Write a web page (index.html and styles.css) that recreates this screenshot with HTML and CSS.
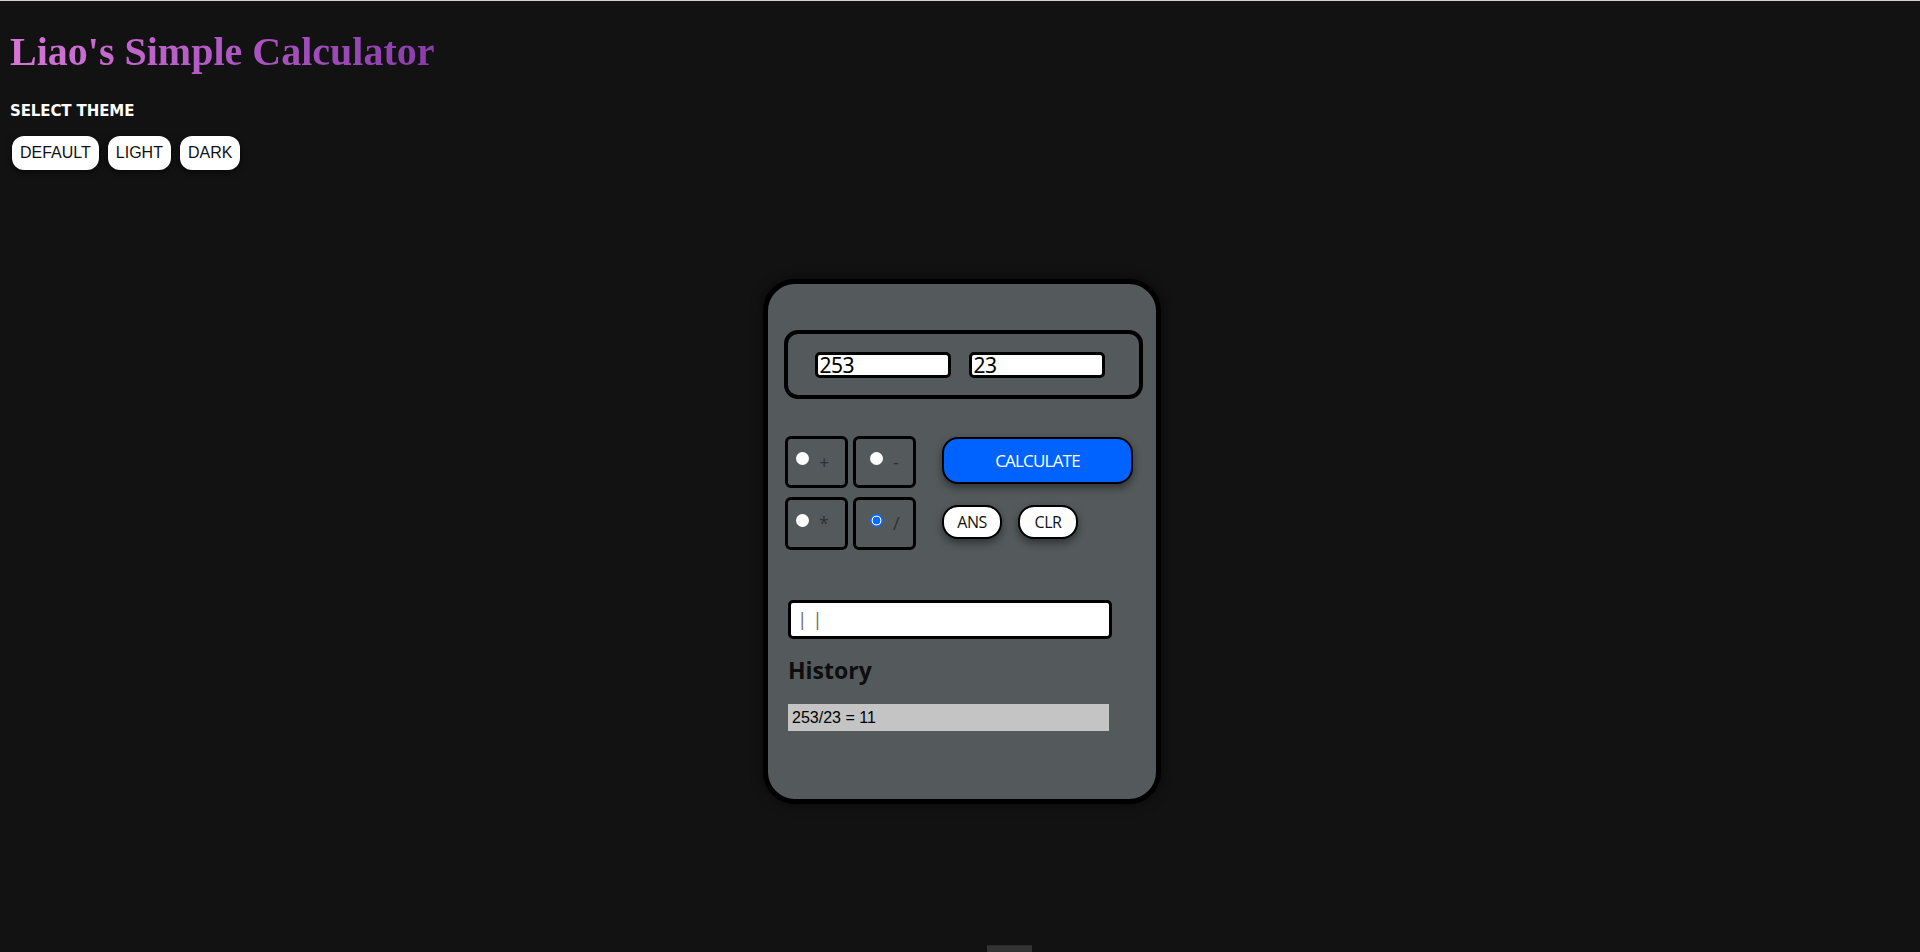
FILE: index.html
```html
<!DOCTYPE html>
<html lang="en">
<head>
<meta charset="utf-8">
<title>Liao's Simple Calculator</title>
<link rel="stylesheet" href="styles.css">
</head>
<body>
<div class="topline"></div>
<header class="header">
  <h1 class="title">Liao's Simple Calculator</h1>
  <div class="theme-label">SELECT THEME</div>
  <div class="theme-buttons">
    <button class="theme-btn">DEFAULT</button>
    <button class="theme-btn">LIGHT</button>
    <button class="theme-btn">DARK</button>
  </div>
</header>
<main class="stage">
  <section class="calc">
    <div class="display">
      <input class="num-input" type="text" value="253">
      <input class="num-input" type="text" value="23">
    </div>
    <div class="controls">
      <div class="ops">
        <label class="op"><input type="radio" name="op" class="radio"><span class="op-sign">+</span></label>
        <label class="op"><input type="radio" name="op" class="radio"><span class="op-sign">-</span></label>
        <label class="op"><input type="radio" name="op" class="radio"><span class="op-sign">*</span></label>
        <label class="op"><input type="radio" name="op" class="radio" checked><span class="op-sign">/</span></label>
      </div>
      <div class="actions">
        <button class="calc-btn">CALCULATE</button>
        <div class="small-actions">
          <button class="pill-btn">ANS</button>
          <button class="pill-btn">CLR</button>
        </div>
      </div>
    </div>
    <div class="result">| |</div>
    <h2 class="history-title">History</h2>
    <div class="history-item">253/23 = 11</div>
  </section>
  <div class="footer-tab"></div>
</main>
</body>
</html>
```
FILE: styles.css
```css
html, body {
  margin: 0;
  padding: 0;
  background: #121212;
}
body {
  overflow: hidden;
  height: 952px;
}
.topline {
  height: 1px;
  background: #d8cccc;
}
.header {
  padding: 0 8px 0 10px;
}
.title {
  display: inline-block;
  margin: 28px 0 0 0;
  font-family: "Liberation Serif", "Times New Roman", serif;
  font-weight: bold;
  font-size: 40px;
  line-height: 46px;
  background: linear-gradient(90deg, #d677d6 0%, #b158c4 50%, #8a3cab 100%);
  -webkit-background-clip: text;
  background-clip: text;
  color: transparent;
}
.theme-label {
  margin-top: 27px;
  font-family: "DejaVu Sans", sans-serif;
  font-weight: bold;
  font-size: 15px;
  line-height: 18px;
  letter-spacing: -0.1px;
  color: #ffffff;
}
.theme-buttons {
  display: flex;
  gap: 9px;
  margin-top: 16px;
  padding-left: 2px;
}
.theme-btn {
  height: 34px;
  padding: 0 8px;
  border: none;
  border-radius: 12px;
  background: #ffffff;
  color: #111;
  font-family: "Liberation Sans", Arial, sans-serif;
  font-size: 16px;
  box-shadow: 0 2px 6px rgba(0, 0, 0, 0.6);
}
.stage {
  display: flex;
  flex-direction: column;
  align-items: center;
  padding-left: 4px;
  margin-top: 109px;
}
.calc {
  box-sizing: border-box;
  width: 398px;
  height: 525px;
  border: 5px solid #000;
  border-radius: 32px;
  background: #545a5c;
  padding: 46px 13px 0 16px;
  box-shadow: 0 0 12px rgba(0, 0, 0, 0.5);
  font-family: "Open Sans", "Noto Sans", sans-serif;
}
.display {
  box-sizing: border-box;
  height: 69px;
  border: 4px solid #000;
  border-radius: 14px;
  display: flex;
  align-items: center;
  justify-content: center;
  gap: 18px;
  padding-right: 8px;
}
.num-input {
  box-sizing: border-box;
  width: 136px;
  height: 26px;
  border: 3px solid #000;
  border-radius: 5px;
  background: #fff;
  padding: 0 2px;
  font-family: "Noto Sans", "Open Sans", sans-serif;
  font-size: 21px;
  letter-spacing: -0.5px;
  color: #000;
  outline: none;
}
.controls {
  display: flex;
  margin-top: 37px;
  padding-left: 1px;
}
.ops {
  display: grid;
  grid-template-columns: 63px 63px;
  grid-template-rows: 52px 53px;
  column-gap: 5px;
  row-gap: 9px;
}
.op {
  box-sizing: border-box;
  border: 3px solid #000;
  border-radius: 6px;
  display: flex;
  align-items: center;
  align-self: stretch;
  padding: 0 0 3px 8px;
  gap: 10px;
}
.op:nth-child(2), .op:nth-child(4) {
  padding-left: 14px;
}
.radio {
  appearance: none;
  -webkit-appearance: none;
  margin: 0 0 4px 0;
  width: 13px;
  height: 13px;
  border-radius: 50%;
  background: #fff;
}
.radio:checked {
  background: radial-gradient(circle, #0b6bff 0 3.6px, #ffffff 4.2px 4.6px, #0b6bff 5.2px);
}
.op-sign {
  font-family: "Open Sans", sans-serif;
  font-size: 18px;
  line-height: 22px;
  color: #2e3132;
  margin-top: 2px;
}
.actions {
  margin-left: 26px;
  display: flex;
  flex-direction: column;
  align-items: flex-start;
  padding-top: 1px;
}
.calc-btn {
  box-sizing: border-box;
  width: 191px;
  height: 47px;
  border: 2px solid #000;
  border-radius: 16px;
  background: #0062ff;
  color: #fff;
  font-family: "Open Sans", sans-serif;
  font-size: 17px;
  letter-spacing: -0.8px;
  box-shadow: 0 4px 8px rgba(0, 0, 0, 0.45);
}
.small-actions {
  display: flex;
  gap: 16px;
  margin-top: 21px;
}
.pill-btn {
  box-sizing: border-box;
  width: 60px;
  height: 34px;
  border: 2px solid #000;
  border-radius: 16px;
  background: #fff;
  color: #111;
  font-family: "Open Sans", sans-serif;
  font-size: 16px;
  letter-spacing: -0.5px;
  box-shadow: 0 4px 8px rgba(0, 0, 0, 0.45);
}
.result {
  box-sizing: border-box;
  margin-top: 50px;
  margin-left: 4px;
  width: 324px;
  height: 39px;
  border: 3px solid #000;
  border-radius: 5px;
  background: #fff;
  padding-left: 6px;
  font-family: "Open Sans", sans-serif;
  font-size: 19px;
  line-height: 33px;
  color: #6f6a66;
}
.history-title {
  margin: 15px 0 0 4px;
  font-family: "Open Sans", sans-serif;
  font-weight: bold;
  font-size: 23px;
  line-height: 32px;
  color: #0e0e0e;
}
.history-item {
  box-sizing: border-box;
  margin: 18px 0 0 4px;
  width: 321px;
  height: 27px;
  background: #c4c4c4;
  padding-left: 4px;
  font-family: "Liberation Sans", Arial, sans-serif;
  font-size: 16px;
  line-height: 27px;
  color: #000;
}
.footer-tab {
  margin-top: 141px;
  margin-left: 94px;
  width: 45px;
  height: 10px;
  border-top: 1px solid #2a2a2a;
  background: #333;
}
```
